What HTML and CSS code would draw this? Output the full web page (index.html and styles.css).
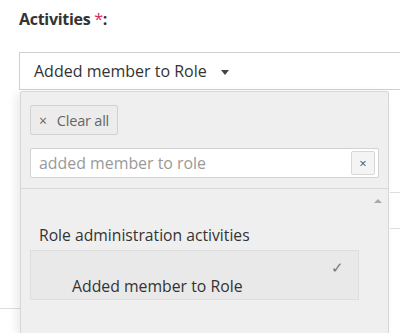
FILE: index.html
```
<!DOCTYPE html>
<html>
<head>
<meta charset="utf-8">
<link rel="stylesheet" href="styles.css">
</head>
<body>
<div class="page">
  <div class="label">Activities <span class="req">*</span>:</div>
  <div class="select">
    <span class="select-text">Added member to Role</span>
    <span class="caret"></span>
  </div>
  <div class="bg-lines">
    <div class="bg-line l1"></div>
    <div class="bg-line l2"></div>
    <div class="bg-line l3"></div>
  </div>
  <div class="panel">
    <div class="actions">
      <button class="clear-all"><span class="x">×</span>Clear all</button>
    </div>
    <div class="search">
      <span class="search-text">added member to role</span>
      <span class="search-clear">×</span>
    </div>
    <div class="list">
      <div class="scroll-up"></div>
      <div class="group">Role administration activities</div>
      <div class="option">
        <span class="check">✓</span>
        <span class="option-text">Added member to Role</span>
      </div>
    </div>
  </div>
</div>
</body>
</html>
```
FILE: styles.css
```
html, body {
  margin: 0;
  padding: 0;
  background: #fff;
}
body {
  width: 400px;
  height: 333px;
  overflow: hidden;
  font-family: "Open Sans", "Noto Sans", sans-serif;
  color: #333;
}
.page {
  position: relative;
  padding: 9px 0 0 19px;
  height: 333px;
  box-sizing: border-box;
  overflow: hidden;
}
.label {
  font-weight: 700;
  font-size: 16px;
  line-height: 21px;
  color: #333;
  letter-spacing: -0.3px;
}
.req {
  color: #e0245e;
  font-weight: 400;
}
.select {
  margin-top: 22px;
  height: 38px;
  width: 400px;
  box-sizing: border-box;
  border: 1px solid #cfcfcf;
  border-right: none;
  display: flex;
  align-items: center;
  padding-left: 14px;
  font-size: 16px;
  color: #333;
}
.caret {
  margin-left: 14px;
  margin-top: 2px;
  width: 0;
  height: 0;
  border-left: 4.5px solid transparent;
  border-right: 4.5px solid transparent;
  border-top: 5px solid #444;
}
.bg-lines .bg-line {
  position: absolute;
  background: #ddd;
}
.l1 { left: 390px; top: 192px; width: 10px; height: 1px; }
.l2 { left: 390px; top: 228px; width: 10px; height: 1px; }
.l3 { left: 0; top: 308px; width: 20px; height: 1px; }
.panel {
  position: absolute;
  left: 20px;
  top: 91px;
  width: 369px;
  height: 242px;
  box-sizing: border-box;
  background: #efefef;
  border: 1px solid #d6d6d6;
  border-bottom: none;
  border-radius: 3px 3px 0 0;
  box-shadow: -4px 2px 8px rgba(0,0,0,0.08);
  padding-top: 13px;
}
.actions {
  padding-left: 9px;
  height: 30px;
}
.clear-all {
  height: 30px;
  box-sizing: border-box;
  border: 1px solid #d2d2d2;
  border-radius: 2px;
  background: #ececec;
  color: #666;
  font-family: "Open Sans", "Noto Sans", sans-serif;
  font-size: 14.5px;
  padding: 0 8px 0 8px;
  display: flex;
  align-items: center;
  letter-spacing: -0.2px;
}
.clear-all .x {
  font-size: 14px;
  margin-right: 10px;
  color: #666;
}
.search {
  margin: 13px 9px 0 9px;
  height: 30px;
  box-sizing: border-box;
  background: #fff;
  border: 1px solid #d2d2d2;
  border-radius: 2px;
  display: flex;
  align-items: center;
  justify-content: space-between;
  padding: 0 3px 0 8px;
}
.search-text {
  font-size: 15.9px;
  color: #999;
}
.search-clear {
  width: 24px;
  height: 24px;
  box-sizing: border-box;
  border: 1px solid #d8d8d8;
  border-radius: 2px;
  background: #f4f4f4;
  color: #555;
  font-size: 13px;
  display: flex;
  align-items: center;
  justify-content: center;
}
.list {
  position: relative;
  margin-top: 10px;
  border-top: 1px solid #d8d8d8;
  padding-top: 35px;
}
.scroll-up {
  position: absolute;
  right: 6px;
  top: 10px;
  width: 0;
  height: 0;
  border-left: 4px solid transparent;
  border-right: 4px solid transparent;
  border-bottom: 4px solid #aaa;
}
.group {
  padding-left: 18px;
  font-size: 15.7px;
  line-height: 22px;
  color: #333;
}
.option {
  position: relative;
  margin: 4px 29px 0 9px;
  height: 50px;
  box-sizing: border-box;
  background: #e9e9e9;
  border: 1px solid #dedede;
  padding: 24px 0 0 41px;
}
.option-text {
  font-size: 15.8px;
  line-height: 22px;
  color: #333;
}
.check {
  position: absolute;
  right: 14px;
  top: 6px;
  font-size: 15px;
  color: #777;
}
```
